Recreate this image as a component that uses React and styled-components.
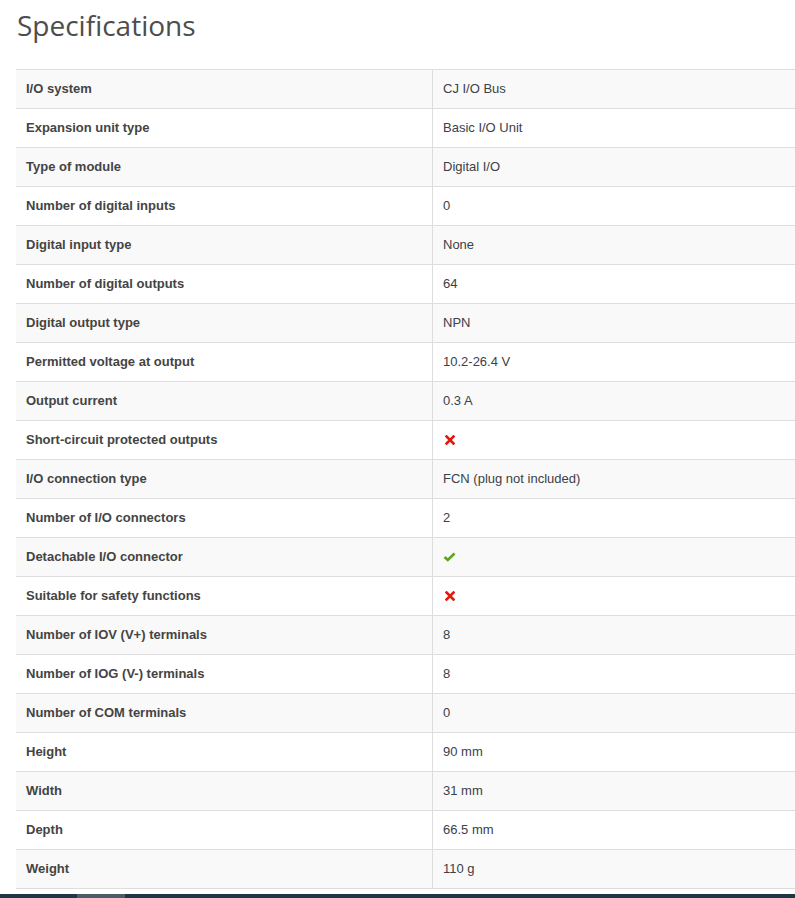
import React from 'react';
import styled, { createGlobalStyle } from 'styled-components';

const GlobalStyle = createGlobalStyle`
  body {
    margin: 0;
    background: #fff;
    font-family: "Liberation Sans", Arial, sans-serif;
    overflow: hidden;
  }
`;

const Page = styled.div`
  padding: 0 0 0 16px;
`;

const Heading = styled.h2`
  font-family: "Open Sans", sans-serif;
  font-weight: 400;
  font-size: 28px;
  line-height: 36px;
  color: #4d4d4d;
  margin: 7px 0 26px 1px;
`;

const Table = styled.table`
  width: calc(100% + 2px);
  border-collapse: collapse;
  border-top: 1px solid #ddd;
  border-bottom: 1px solid #ddd;
  font-size: 13px;
  color: #333;
`;

const Row = styled.tr`
  background: ${p => (p.$striped ? '#f9f9f9' : '#fff')};
  border-top: 1px solid #ddd;
`;

const Label = styled.th`
  width: 396px;
  text-align: left;
  font-weight: 700;
  color: #444;
  padding: 0 10px 1px;
  height: 37px;
  border-right: 1px solid #ddd;
`;

const Value = styled.td`
  padding: 0 10px 1px;
  height: 37px;
  color: #3b4148;
`;

const Footer = styled.div`
  margin-top: 5px;
  height: 10px;
  background: #1f3744;
  display: flex;
`;

const FooterTab = styled.div`
  margin-left: 77px;
  width: 48px;
  height: 100%;
  background: #4b5c67;
`;

const Cross = () => (
  <svg width="10" height="10" viewBox="0 0 10 10" style={{ display: 'block', marginLeft: 2 }}>
    <path d="M1.5 1.5 L8.5 8.5 M8.5 1.5 L1.5 8.5" stroke="#e8160c" strokeWidth="2.6" strokeLinecap="square" />
  </svg>
);

const Check = () => (
  <svg width="13" height="10" viewBox="0 0 13 10" style={{ display: 'block' }}>
    <path d="M1.5 5 L4.8 8 L11.5 1.5" stroke="#5aa81a" strokeWidth="2.6" fill="none" strokeLinejoin="miter" />
  </svg>
);

const specs = [
  ['I/O system', 'CJ I/O Bus'],
  ['Expansion unit type', 'Basic I/O Unit'],
  ['Type of module', 'Digital I/O'],
  ['Number of digital inputs', '0'],
  ['Digital input type', 'None'],
  ['Number of digital outputs', '64'],
  ['Digital output type', 'NPN'],
  ['Permitted voltage at output', '10.2-26.4 V'],
  ['Output current', '0.3 A'],
  ['Short-circuit protected outputs', false],
  ['I/O connection type', 'FCN (plug not included)'],
  ['Number of I/O connectors', '2'],
  ['Detachable I/O connector', true],
  ['Suitable for safety functions', false],
  ['Number of IOV (V+) terminals', '8'],
  ['Number of IOG (V-) terminals', '8'],
  ['Number of COM terminals', '0'],
  ['Height', '90 mm'],
  ['Width', '31 mm'],
  ['Depth', '66.5 mm'],
  ['Weight', '110 g'],
];

export default function App() {
  return (
    <>
      <GlobalStyle />
      <Page>
        <Heading>Specifications</Heading>
        <Table>
          <tbody>
            {specs.map(([label, value], i) => (
              <Row key={label} $striped={i % 2 === 0}>
                <Label>{label}</Label>
                <Value>
                  {value === true ? <Check /> : value === false ? <Cross /> : value}
                </Value>
              </Row>
            ))}
          </tbody>
        </Table>
      </Page>
      <Footer>
        <FooterTab />
      </Footer>
    </>
  );
}
